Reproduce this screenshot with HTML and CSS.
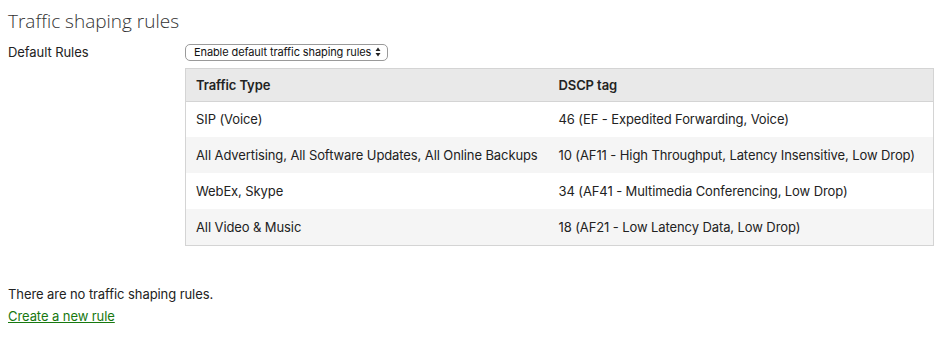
FILE: index.html
```html
<!DOCTYPE html>
<html lang="en">
<head>
  <meta charset="UTF-8" />
  <title>Traffic shaping rules</title>
  <link rel="stylesheet" href="styles.css">
</head>
<body>
  <div class="shaping-page">
    <h2 class="shaping-title">Traffic shaping rules</h2>
    <div class="shaping-row">
      <div class="shaping-label">Default Rules</div>
      <div class="shaping-content">
        <div class="shaping-select">
          <span>Enable default traffic shaping rules</span>
          <svg width="6" height="10" viewBox="0 0 6 10"><path d="M3 0.5 L5.5 4 L0.5 4 Z M3 9.5 L5.5 6 L0.5 6 Z" fill="#222"/></svg>
        </div>
        <table class="shaping-table">
          <thead>
            <tr><th class="col-type">Traffic Type</th><th>DSCP tag</th></tr>
          </thead>
          <tbody>
            <tr><td>SIP (Voice)</td><td>46 (EF - Expedited Forwarding, Voice)</td></tr>
            <tr><td>All Advertising, All Software Updates, All Online Backups</td><td>10 (AF11 - High Throughput, Latency Insensitive, Low Drop)</td></tr>
            <tr><td>WebEx, Skype</td><td>34 (AF41 - Multimedia Conferencing, Low Drop)</td></tr>
            <tr><td>All Video &amp; Music</td><td>18 (AF21 - Low Latency Data, Low Drop)</td></tr>
          </tbody>
        </table>
      </div>
    </div>
    <p class="shaping-empty">There are no traffic shaping rules.</p>
    <a href="#" class="shaping-link">Create a new rule</a>
  </div>
</body>
</html>
```

FILE: styles.css
```css
* {
  margin: 0;
  padding: 0;
  box-sizing: border-box;
}

body {
  background-color: white;
  font-family: 'Inter', 'Liberation Sans', Arial, sans-serif;
  font-size: 13px;
  line-height: 16px;
  letter-spacing: -0.08px;
  color: #222;
}

.shaping-page {
  padding: 9px 8px;
}

.shaping-title {
  font-family: 'Open Sans', sans-serif;
  font-weight: 300;
  font-size: 19px;
  letter-spacing: 0;
  color: #333;
  line-height: 24px;
  margin-bottom: 10px;
}

.shaping-row {
  display: flex;
}

.shaping-label {
  width: 177px;
  padding-top: 1px;
}

.shaping-content {
  flex: 1;
}

.shaping-select {
  display: inline-flex;
  align-items: center;
  justify-content: space-between;
  height: 17px;
  width: 203px;
  padding: 0 6px 0 8px;
  border: 1px solid #9a9a9a;
  border-radius: 5px;
  font-size: 11px;
  letter-spacing: -0.1px;
  color: #111;
}

.shaping-table {
  margin-top: 7px;
  width: 749px;
  table-layout: fixed;
  border-collapse: collapse;
  border: 1px solid #d4d4d4;
}

.shaping-table th,
.shaping-table td {
  white-space: nowrap;
  text-align: left;
  padding: 0 10px;
  letter-spacing: -0.1px;
}

.shaping-table th {
  background-color: #e9e9e9;
  font-weight: 600;
  height: 33px;
  border-bottom: 1px solid #d4d4d4;
}

.shaping-table th.col-type {
  width: 363px;
}

.shaping-table td {
  height: 36px;
}

.shaping-table tbody tr:nth-child(even) td {
  background-color: #f5f5f5;
}

.shaping-empty {
  margin-top: 40px;
}

.shaping-link {
  display: inline-block;
  margin-top: 6px;
  color: #17780f;
  text-decoration: underline;
}
```
